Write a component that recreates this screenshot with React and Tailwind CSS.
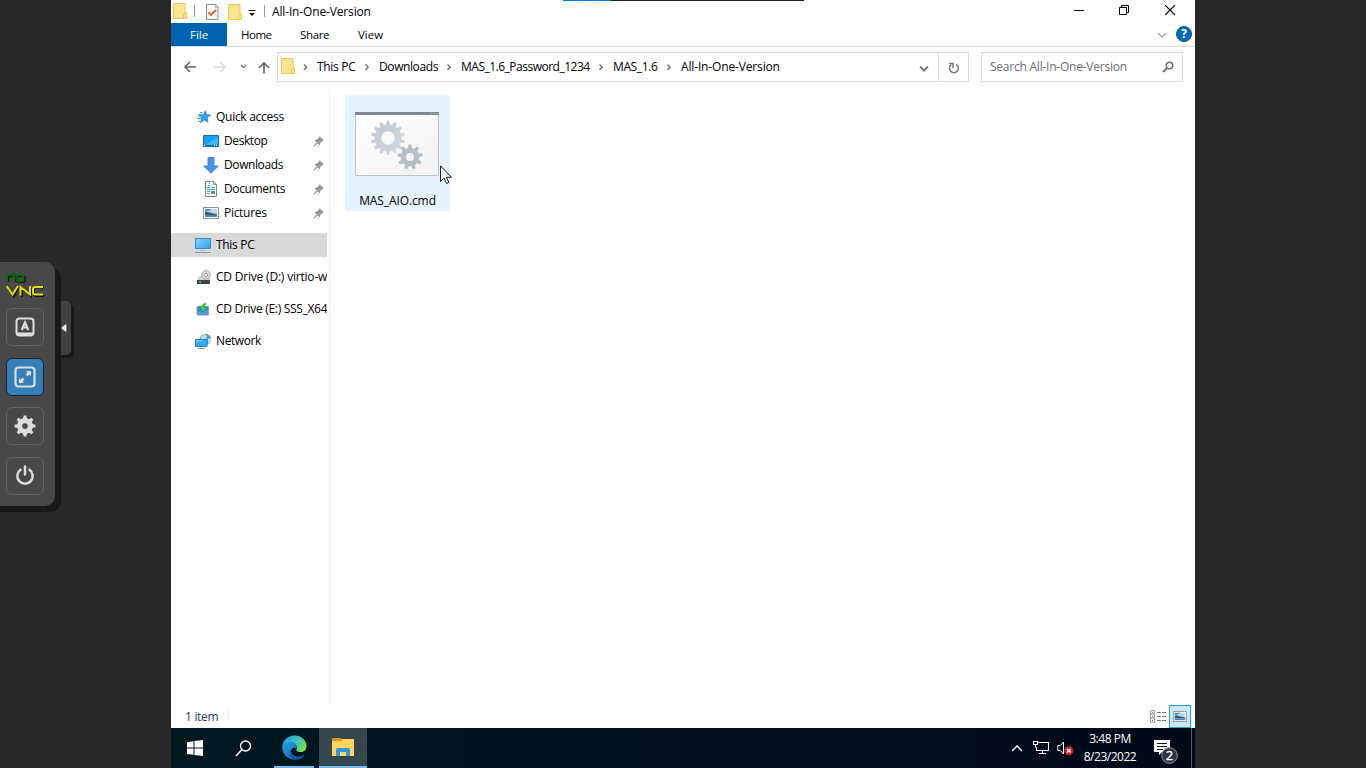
import React from "react";

function Svg({ w, h, className = "", children }) {
  return (
    <svg width={w} height={h} viewBox={`0 0 ${w} ${h}`} fill="none" className={`block shrink-0 ${className}`}>
      {children}
    </svg>
  );
}

function gearPath(cx, cy, outer, inner, teeth, hole) {
  const step = (Math.PI * 2) / teeth;
  const pts = [];
  for (let i = 0; i < teeth; i++) {
    const a = i * step - Math.PI / 2;
    [[-0.3, inner], [-0.17, outer], [0.17, outer], [0.3, inner]].forEach(([o, r]) => {
      pts.push(`${(cx + r * Math.cos(a + o * step)).toFixed(2)},${(cy + r * Math.sin(a + o * step)).toFixed(2)}`);
    });
  }
  return `M${pts.join("L")}Z M${cx - hole},${cy}a${hole},${hole} 0 1 0 ${hole * 2},0a${hole},${hole} 0 1 0 ${-hole * 2},0Z`;
}

const Folder = ({ className }) => (
  <Svg w={14} h={17} className={className}>
    <path d="M.5.5h11.500v9.500h1.500v5.500h-13z" fill="#ffe48f" stroke="#eec654" />
    <path d="M10.500 15.500v-4l1.500-1.500h1.500v5.500z" fill="#ffe48f" stroke="#eec654" />
  </Svg>
);

const CheckDoc = () => (
  <Svg w={13} h={16}>
    <path d="M.5.5h9l2.500 2.500v12.500H.5z" fill="#fafafa" stroke="#8c8c8c" />
    <path d="M9.500.500v3h3" stroke="#aaa" />
    <path d="M2.500 8.500l2.500 2.500 5-5" stroke="#e85a1c" strokeWidth="1.800" />
  </Svg>
);

const Chevron = () => (
  <Svg w={23} h={8}>
    <path d="M9.500 1.500l2.700 2.700-2.700 2.700" stroke="#777" strokeWidth="1.500" />
  </Svg>
);

const Pin = () => (
  <Svg w={11} h={11}>
    <path d="M6.500 0L11 4.500 9.500 5 7.500 7 7 9.500 4.500 7.500 .5 11 0 10.500 3.500 6.500 1.500 4 4 3.500 6 1.500z" fill="#8e9aa5" />
  </Svg>
);

const Star = () => (
  <Svg w={16} h={14}>
    <path d="M9.500.800l.9 4 4.300.200-3.600 2.800.9 4.400-3.500-2.300-4 2.600L5.700 8 3 5.500l4-.5z" fill="#34a9ec" stroke="#1684cf" strokeWidth=".8" />
    <path d="M4 2.500h3M2 4.500h4M3 6.500h3M1 8.500h4M2 11.500h2" stroke="#4bb0e9" />
  </Svg>
);

const Desktop = () => (
  <Svg w={16} h={12}>
    <path d="M.5.5h15v11h-15z" fill="#18a0fb" stroke="#0b73be" />
    <path d="M1 10L15 2v8z" fill="#43b3fc" />
    <path d="M1 10.500h14" stroke="#0768ac" />
    <path d="M1 10.500h1M11 10.500h1M13 10.500h1" stroke="#fff" />
  </Svg>
);

const Download = () => (
  <Svg w={16} h={17}>
    <path d="M5 .5h6v8.500h4.300L8 16.300.7 9H5z" fill="#4396e8" stroke="#2b79c9" strokeWidth=".8" />
  </Svg>
);

const Document = () => (
  <Svg w={12} h={16}>
    <path d="M.5.5h8l3 3v12h-11z" fill="#fff" stroke="#7e8389" />
    <path d="M8.500.500v3h3" stroke="#92979c" />
    <path d="M5 2.500H4M5 4.500H3M7 6.500h3M2 6.500h4M2 8.500h8M2 10.500h3M2 12.500h3" stroke="#45a2df" />
    <path d="M6 10h4v3H6z" fill="#5b91bd" />
  </Svg>
);

const Picture = ({ small }) => (
  <Svg w={small ? 14 : 16} h={small ? 11 : 12}>
    <g transform={small ? "scale(.875 .917)" : undefined}>
      <path d="M.5.5h15v11h-15z" fill="#fff" stroke="#8c9092" />
      <path d="M2 2h12v8H2z" fill="#b9dcf7" />
      <path d="M2 2h7L5 4 2 5z" fill="#5791cf" />
      <path d="M2 5c4-.5 5 1 12 2v1H2z" fill="#365f60" />
      <path d="M2 8h12v2H2z" fill="#4c86b8" />
    </g>
  </Svg>
);

const Pc = () => (
  <Svg w={16} h={15}>
    <defs>
      <linearGradient id="pcScreen" x2="1" y2="1">
        <stop stopColor="#88d4ff" />
        <stop offset="1" stopColor="#2aa5f5" />
      </linearGradient>
    </defs>
    <path d="M.5.5h15v10h-15z" fill="url(#pcScreen)" stroke="#358abd" />
    <path d="M5 12.500h6" stroke="#b4c0c8" />
    <path d="M0 14.500h16" stroke="#7c98ad" />
  </Svg>
);

const Disc = () => (
  <Svg w={15} h={15}>
    <path d="M3 6h10l1.500 4H1z" fill="#d2d2d2" />
    <circle cx="10" cy="4.800" r="4.200" fill="#dedede" stroke="#a5a5a5" />
    <circle cx="10" cy="4.800" r="1.700" fill="#fff" stroke="#999" />
    <path d="M1 10h13v4H1z" fill="#404040" />
    <path d="M3 12h2" stroke="#39d35d" strokeWidth="1.500" />
  </Svg>
);

const Installer = () => (
  <Svg w={14} h={13}>
    <path d="M1 3.500h11.500v8.500H1z" fill="#3f7dcf" stroke="#8ba1bc" />
    <path d="M1.500 11.500V8l5 1 5.500-3v5.500z" fill="#5797e0" />
    <path d="M10 .4C7.500.4 6 1.700 5.700 4L3.500 3.500l3 5.500L11 5l-2-.5c-.2-1.700 0-2.700 1-4.100z" fill="#36d75f" stroke="#179447" strokeWidth=".6" />
  </Svg>
);

const NetworkIcon = () => (
  <Svg w={17} h={17}>
    <circle cx="10.500" cy="6.300" r="5.600" fill="#6299bd" />
    <path d="M6 4l3-3 2 1 1 3-3 2-3-1zM13 6l3-1v4l-3 2z" fill="#b3e2f6" />
    <path d="M.5 6.500h11.500v7H.5z" fill="#35adf2" stroke="#277eb3" />
    <path d="M1 10L9 7H1z" fill="#62c6fb" />
    <path d="M3 15.500h7" stroke="#819bad" />
  </Svg>
);

const NAV = [
  { label: "Desktop", icon: <Desktop />, track: "tracking-[-0.41px]" },
  { label: "Downloads", icon: <Download />, track: "tracking-[-0.4px]" },
  { label: "Documents", icon: <Document />, track: "tracking-[-0.36px]" },
  { label: "Pictures", icon: <Picture />, track: "tracking-[-0.3px]" },
];

const DRIVES = [
  { label: "This PC", icon: <Pc />, row: "bg-[#d9d9d9]", track: "tracking-[-0.3px]" },
  { label: "CD Drive (D:) virtio-w", icon: <Disc />, row: "", track: "tracking-[-0.2px]" },
  { label: "CD Drive (E:) SSS_X64", icon: <Installer />, row: "", track: "tracking-[-0.3px]" },
  { label: "Network", icon: <NetworkIcon />, row: "", track: "tracking-[-0.4px]" },
];

const CRUMBS = [
  { label: "This PC", width: "w-[39px]", track: "tracking-[-0.3px]" },
  { label: "Downloads", width: "w-[59px]", track: "tracking-[-0.4px]" },
  { label: "MAS_1.6_Password_1234", width: "w-[129px]", track: "tracking-[-0.5px]" },
  { label: "MAS_1.6", width: "w-[45px]", track: "tracking-[-0.38px]" },
  { label: "All-In-One-Version", width: "w-[100px]", track: "tracking-[-0.15px]" },
];

function VncButton({ active, children }) {
  return (
    <div className={`flex h-[38px] w-[38px] items-center justify-center rounded-[6px] border ${active ? "border-[#17222b] bg-[#347fb8]" : "border-[#626262]"}`}>
      {children}
    </div>
  );
}

function VncBar() {
  return (
    <aside className="flex w-[171px] shrink-0 items-start overflow-hidden pt-[262px]">
      <div className="z-10 -ml-[10px] flex h-[244px] w-[65px] shrink-0 flex-col items-start rounded-r-[10px] bg-[#484848] pl-[16px] pt-[10px] shadow-[6px_6px_0_#191919]">
        <Svg w={40} h={26}>
          <g strokeWidth="2">
            <path d="M2.500 10V4h4.500q2.500 0 2.500 2v4M13 4h3.500q2.500 0 2.500 2v2q0 2-2 2h-4q-2 0-2-2V6q0-2 2-2z" stroke="#151515" />
            <path d="M1.200 9V3h4.300Q8 3 8 5v4M12.500 3H15q2.500 0 2.500 2v2q0 2-2 2h-3q-2 0-2-2V5q0-2 2-2z" stroke="#056d05" />
            <path d="M2 15l5.800 9L13 15M16 25v-9l9 8V16M38 15.500h-8q-2 0-2 2V22q0 2 2 2h8" stroke="#151515" />
            <path d="M.7 14l5.800 8.500L12 14M14.500 23.500V15l9.500 7.500V14M37 15h-7.500q-2.500 0-2.500 2v3.500q0 2 2.500 2H37" stroke="#dfdf00" />
          </g>
        </Svg>
        <div className="mt-[10px] flex flex-col gap-[11.600px]">
          <VncButton>
            <Svg w={20} h={20}>
              <rect x="1.500" y="1.500" width="17" height="17" rx="3" stroke="#ddd" strokeWidth="2" />
              <path d="M2 15.500h16v1.500q0 2-2 2H4q-2 0-2-2z" fill="#ddd" />
              <path d="M6.700 13L10 5.500l3.300 7.500M8 10.500h4" stroke="#ddd" strokeWidth="2.200" />
            </Svg>
          </VncButton>
          <VncButton active>
            <Svg w={22} h={22}>
              <rect x="1.500" y="1.500" width="19" height="19" rx="3" stroke="#ddd" strokeWidth="2.200" />
              <path d="M12 5h5v5l-1.500-1.500-2 2-2-2 2-2zM5 12l1.500 1.500 2-2 2 2-2 2L10 17H5z" fill="#ddd" />
            </Svg>
          </VncButton>
          <VncButton>
            <Svg w={22} h={22}>
              <path d={gearPath(11, 11, 10.5, 8, 8, 2.8)} fill="#ddd" fillRule="evenodd" />
            </Svg>
          </VncButton>
          <VncButton>
            <Svg w={22} h={22}>
              <path d="M6.500 4.800a7.700 7.700 0 1 0 9 0M11 1.500v8" stroke="#ddd" strokeWidth="2.500" strokeLinecap="round" />
            </Svg>
          </VncButton>
        </div>
      </div>
      <div className="mt-[39px] flex h-[54px] w-[16px] items-center rounded-r-[5px] bg-[#424242] pl-[6px] shadow-[3px_3px_0_#191919]">
        <Svg w={6} h={8}><path d="M5 .5v7L.5 4z" fill="#eee" stroke="#eee" strokeWidth=".8" /></Svg>
      </div>
    </aside>
  );
}

function TitleBar() {
  return (
    <div className="flex h-[23px] shrink-0 items-start">
      <Folder className="ml-[2px] mt-[3px]" />
      <div className="ml-[7px] mt-[5px] h-[12px] w-px bg-[#999]" />
      <div className="ml-[11px] mt-[4px]"><CheckDoc /></div>
      <Folder className="ml-[9px] mt-[4px]" />
      <Svg w={8} h={6} className="ml-[6px] mt-[10px]">
        <path d="M.5.5h7" stroke="#222" />
        <path d="M1 3h6L4 6z" fill="#111" />
      </Svg>
      <div className="ml-[8px] mt-[5px] h-[12px] w-px bg-[#999]" />
      <div className="ml-[7px] mt-[4px] whitespace-nowrap leading-[16px] tracking-[-0.15px]">All-In-One-Version</div>
      <div className="ml-auto mr-[19px] mt-[5px] flex items-start">
        <Svg w={11} h={11}><path d="M0 5.500h10" stroke="#000" /></Svg>
        <Svg w={11} h={11} className="ml-[34px]">
          <path d="M.5 2.500h7v7h-7zM2.500 2.500v-2h7v7h-2" stroke="#000" />
        </Svg>
        <Svg w={11} h={11} className="ml-[35px]"><path d="M0 0l10 10M10 0L0 10" stroke="#000" strokeWidth="1.100" /></Svg>
      </div>
    </div>
  );
}

function Ribbon() {
  return (
    <div className="flex h-[24px] shrink-0 border-b border-[#d9d9d9] text-[11.500px] leading-[24px]">
      <div className="w-[56px] bg-[#0063b1] pl-[19px] text-white">File</div>
      <div className="ml-[14px] w-[59px] tracking-[-0.5px]">Home</div>
      <div className="w-[58px] tracking-[-0.35px]">Share</div>
      <div>View</div>
      <div className="ml-auto mr-[3px] flex items-center gap-[9px]">
        <Svg w={10} h={6}><path d="M1 1l4 4 4-4" stroke="#a0a0a0" strokeWidth="1.200" /></Svg>
        <div className="mt-[-2px] flex h-[16px] w-[16px] items-center justify-center rounded-full border border-[#085399] bg-[#0068c5] text-[12px] font-bold leading-none text-white">?</div>
      </div>
    </div>
  );
}

function AddressRow() {
  return (
    <div className="flex h-[43px] shrink-0 items-start pt-[5px]">
      <div className="flex h-[30px] w-[106px] shrink-0 items-center pl-[12px]">
        <Svg w={14} h={12}><path d="M13 6H2M7 1L2 6l5 5" stroke="#686868" strokeWidth="1.600" /></Svg>
        <Svg w={14} h={12} className="ml-[16px]"><path d="M1 6h11M7 1l5 5-5 5" stroke="#d5d5d5" strokeWidth="1.500" /></Svg>
        <Svg w={7} h={5} className="ml-[13px] mt-[-2px]"><path d="M1 1l2.500 2.500L6 1" stroke="#777" strokeWidth="1.500" /></Svg>
        <Svg w={12} h={13} className="ml-[11px] mt-[1px]"><path d="M6 12.500V2M1 7l5-5 5 5" stroke="#686868" strokeWidth="1.700" /></Svg>
      </div>
      <div className="flex h-[30px] w-[692px] items-center border border-[#d9d9d9]">
        <Folder className="ml-[3px] mr-[1px] mt-[-1px]" />
        <div className="flex items-center">
          <Svg w={21} h={8}><path d="M8 1.500l2.700 2.700L8 6.900" stroke="#777" strokeWidth="1.500" /></Svg>
          {CRUMBS.map((c, i) => (
            <React.Fragment key={c.label}>
              {i > 0 && <Chevron />}
              <span className={`shrink-0 whitespace-nowrap ${c.width} ${c.track}`}>{c.label}</span>
            </React.Fragment>
          ))}
        </div>
        <Svg w={10} h={8} className="ml-auto mr-[9px] mt-[3px]"><path d="M1 1.500l4 4 4-4" stroke="#777" strokeWidth="2" /></Svg>
        <div className="flex h-full w-[30px] items-center justify-center border-l border-[#d9d9d9]">
          <Svg w={11} h={12} className="mt-[1px]">
            <path d="M8.200 2.500A4.400 4.400 0 1 1 3.300 2.700" stroke="#777" strokeWidth="1.500" />
            <path d="M1 1.500h4V6" stroke="#777" strokeWidth="1.500" />
          </Svg>
        </div>
      </div>
      <div className="ml-[12px] flex h-[30px] w-[202px] items-center border border-[#d9d9d9] pl-[8px] text-[#6d6d6d]">
        <span className="whitespace-nowrap tracking-[-0.23px]">Search All-In-One-Version</span>
        <Svg w={12} h={12} className="ml-auto mr-[8px]">
          <circle cx="7.500" cy="4.500" r="3.300" stroke="#707070" strokeWidth="1.600" />
          <path d="M5 7L1 11" stroke="#707070" strokeWidth="2" />
        </Svg>
      </div>
    </div>
  );
}

function NavPane() {
  return (
    <nav className="w-[159px] shrink-0 border-r border-[#f0f0f0] pt-[15px]">
      <div className="flex h-[24px] items-center pl-[25px]">
        <Star />
        <span className="ml-[4px] tracking-[-0.28px]">Quick access</span>
      </div>
      {NAV.map((n) => (
        <div key={n.label} className="flex h-[24px] items-center pl-[32px]">
          <div className="flex w-[16px] justify-center">{n.icon}</div>
          <span className={`ml-[5px] ${n.track}`}>{n.label}</span>
          <div className="ml-auto mr-[5px]"><Pin /></div>
        </div>
      ))}
      <div className="mt-[8px] flex flex-col gap-[8px]">
        {DRIVES.map((d) => (
          <div key={d.label} className={`flex h-[24px] w-[156px] items-center overflow-hidden pl-[24px] ${d.row}`}>
            <div className="flex w-[16px] shrink-0 justify-center">{d.icon}</div>
            <span className={`ml-[5px] whitespace-nowrap ${d.track}`}>{d.label}</span>
          </div>
        ))}
      </div>
    </nav>
  );
}

function FileTile() {
  return (
    <div className="relative ml-[15px] mt-[5px] flex h-[116px] w-[105px] flex-col items-center bg-[#e5f3ff] pt-[17px]">
      <Svg w={84} h={64} className="mr-[1px]">
        <defs>
          <linearGradient id="gearFill" x2="1" y2="1">
            <stop stopColor="#bdc8d0" />
            <stop offset="1" stopColor="#d5dade" />
          </linearGradient>
          <linearGradient id="windowFill" x2="1" y2="1">
            <stop stopColor="#fff" />
            <stop offset="1" stopColor="#f2f2f2" />
          </linearGradient>
        </defs>
        <path d="M.5.5h83v63H.5z" fill="url(#windowFill)" stroke="#b9c5cd" />
        <path d="M0 0h84v3H0z" fill="#828990" />
        <path d="M76 1.500h2M79 1.500h1M81 1.500h2" stroke="#a8aeb2" />
        <path d={gearPath(33, 26, 17, 13.5, 14, 6.7)} fill="url(#gearFill)" fillRule="evenodd" />
        <path d={gearPath(55, 45, 12.7, 9.3, 9, 4)} fill="#b8c0c7" fillRule="evenodd" />
      </Svg>
      <span className="mt-[17px] leading-[16px] tracking-[-0.1px]">MAS_AIO.cmd</span>
      <Svg w={12} h={20} className="absolute left-[95px] top-[70px]">
        <path d="M.6.900v15.500l3.500-3.300 2.500 5.500 2.300-1.100-2.500-5.200h5z" fill="#fff" stroke="#111" strokeWidth="1" />
      </Svg>
    </div>
  );
}

function StatusBar() {
  return (
    <div className="flex h-[24px] shrink-0 items-center pl-[14px]">
      <span className="mt-[2px] w-[43px] tracking-[-0.3px] text-[#1e395b]">1 item</span>
      <div className="mb-[2px] h-[12px] w-px bg-[#eee]" />
      <div className="ml-auto mr-[4px] flex items-center gap-[3px]">
        <Svg w={16} h={13}>
          <path d="M.5.5h4v3.500h-4zM.5 4h4v4h-4zM.5 8h4v4.500h-4z" fill="#fff" stroke="#a0a0a0" />
          <path d="M2 2.500h1" stroke="#468ca5" />
          <path d="M2 6.500h1" stroke="#1691e0" />
          <path d="M2 10.500h1" stroke="#e32626" />
          <path d="M7 2.500h4M12 2.500h4M7 6.500h4M12 6.500h4M7 10.500h4M12 10.500h4" stroke="#777" />
        </Svg>
        <div className="flex h-[23px] w-[22px] items-center justify-center border border-[#26a0da] bg-[#cbe8f6]"><Picture small /></div>
      </div>
    </div>
  );
}

const Edge = () => (
  <Svg w={25} h={25}>
    <defs>
      <linearGradient id="edgeTop" x1="0" y1=".2" x2="1" y2=".6">
        <stop stopColor="#229de4" />
        <stop offset=".5" stopColor="#35c1c8" />
        <stop offset="1" stopColor="#78dd4b" />
      </linearGradient>
      <linearGradient id="edgeSide" x2="1" y2="1">
        <stop stopColor="#24a3e3" />
        <stop offset="1" stopColor="#0c5aa5" />
      </linearGradient>
    </defs>
    <path d="M.4 12.500C.4 5.500 5.500.4 12.500.4c7 0 12 5 12 10.600 0 4-2.600 6-6 6-3.500 0-4.500-1.300-4-2.500C16 11 13.500 8 9.500 8 5.500 8 1.500 9.500.4 12.500z" fill="url(#edgeTop)" />
    <path d="M.4 12.500C1 8 5 6.800 8.500 7c4.500.2 7 3.500 5.800 6.500-1.400-2-5.800-.3-5.200 3.300.7 4 5 6.500 9.500 6C12 27.500.4 23 .4 12.500z" fill="url(#edgeSide)" />
    <path d="M8.900 15c-.5 4 3.500 6.800 7.500 6.500 2.600-.1 4.500-1.100 6.400-2.300-1.300 3-4.500 5.200-8.300 5.300-5.500-.5-8.500-5.500-5.600-9.500z" fill="#15569b" />
  </Svg>
);

function Taskbar() {
  return (
    <div className="flex h-[40px] shrink-0 bg-gradient-to-r from-[#001820] via-[#00111d] to-[#000918] text-white">
      <div className="flex w-[48px] items-center justify-center">
        <Svg w={16} h={16}><path d="M0 2.200L6.500 1.200v6.300H0zM7.500 1.100L16 0v7.500H7.500zM0 8.500h6.500v6.300L0 13.900zM7.500 8.500H16V16l-8.500-1.100z" fill="#fff" /></Svg>
      </div>
      <div className="flex w-[48px] items-center justify-center">
        <Svg w={17} h={17}><circle cx="10.500" cy="6" r="5" stroke="#fff" strokeWidth="1.300" /><path d="M7 9.500L1 16" stroke="#fff" strokeWidth="1.400" /></Svg>
      </div>
      <div className="ml-[7px] flex w-[40px] items-center justify-center border-b-2 border-[#76b9ed]"><Edge /></div>
      <div className="ml-[5px] flex w-[48px] items-center justify-center border-b-2 border-[#76b9ed] bg-[#34474f]">
        <Svg w={22} h={19}>
          <path d="M0 1h22v17H0z" fill="#ffd75e" />
          <path d="M0 1q0-1 1-1h8l1 3H0z" fill="#df9800" />
          <path d="M4 18v-6q0-2 2-2h10q2 0 2 2v6h-4v-4H8v4z" fill="#3494df" />
        </Svg>
      </div>
      <div className="ml-auto flex items-center">
        <Svg w={12} h={7}><path d="M1 6l5-5 5 5" stroke="#fff" strokeWidth="1.300" /></Svg>
        <Svg w={17} h={14} className="ml-[10px]">
          <path d="M5 1.500h10.500v8H3.500V6M9.500 9.500v3M6 12.500h7M.5.5h4v3h-4zM2.500 3.500v3" stroke="#fff" strokeWidth="1.100" />
        </Svg>
        <Svg w={17} h={16} className="ml-[7px]">
          <path d="M.8 5.500h2.500l3.200-3.500v12L3.300 10.500H.8z" stroke="#fff" />
          <circle cx="11.800" cy="10.700" r="4.500" fill="#d81f2a" />
          <path d="M10 8.900l3.600 3.600M13.600 8.900L10 12.500" stroke="#fff" strokeWidth="1.400" />
        </Svg>
        <div className="ml-[7px] mt-[-1px] w-[58px] text-center text-[12px] leading-[18px] tracking-[-0.48px]">
          <div>3:48 PM</div>
          <div>8/23/2022</div>
        </div>
        <Svg w={26} h={26} className="ml-[14px] mt-[7px]">
          <path d="M1 1h16v12H9l-3 3v-3H1z" fill="#fff" />
          <path d="M4 4.500h10M4 7.500h10M4 10.500h6" stroke="#06101b" />
          <circle cx="16.500" cy="16.500" r="7.800" fill="#303640" stroke="#8c949d" />
          <text x="16.500" y="21" textAnchor="middle" fontSize="13" fill="#fff" stroke="#fff" strokeWidth=".3" fontFamily="Open Sans">2</text>
        </Svg>
        <div className="ml-[12px] h-[40px] w-px bg-[#52606b]" />
        <div className="w-[3px]" />
      </div>
    </div>
  );
}

export default function App() {
  return (
    <div className="flex h-[768px] w-[1366px] overflow-hidden bg-[#282828] font-['Open_Sans','Noto_Sans',sans-serif] text-[12px] text-black">
      <VncBar />
      <main className="relative flex w-[1024px] shrink-0 flex-col bg-white">
        <div className="absolute left-[392px] top-0 flex h-px w-[241px] bg-[#222]"><div className="w-[48px] bg-[#0078d4]" /></div>
        <TitleBar />
        <Ribbon />
        <AddressRow />
        <div className="flex min-h-0 flex-1">
          <NavPane />
          <FileTile />
        </div>
        <StatusBar />
        <Taskbar />
      </main>
    </div>
  );
}
